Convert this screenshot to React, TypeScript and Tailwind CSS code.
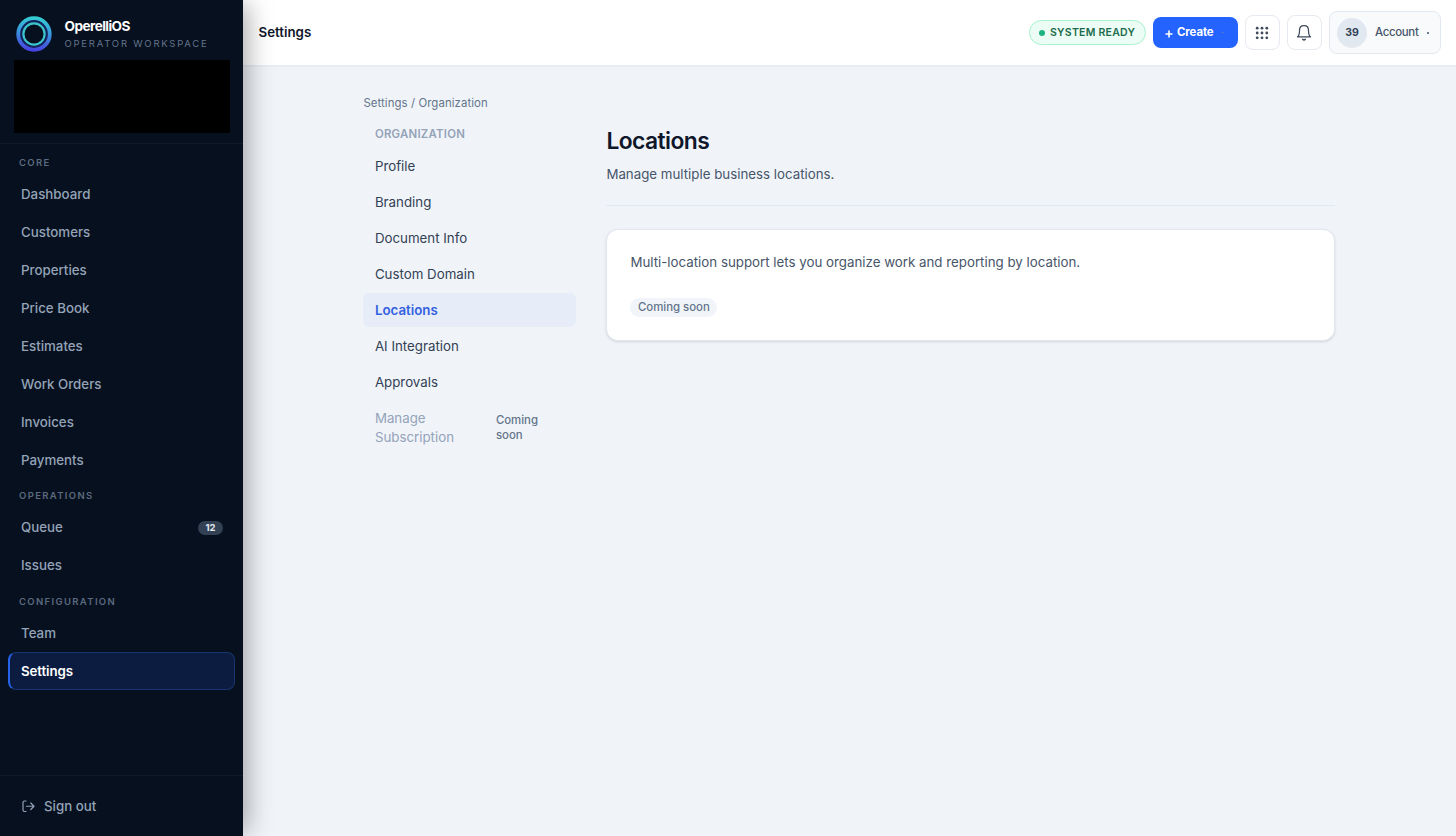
import clsx from "clsx";

const navSections = [
    {
        title: "Core",
        items: [
            { label: "Dashboard" },
            { label: "Customers" },
            { label: "Properties" },
            { label: "Price Book" },
            { label: "Estimates" },
            { label: "Work Orders" },
            { label: "Invoices" },
            { label: "Payments" },
        ],
    },
    {
        title: "Operations",
        items: [{ label: "Queue", badge: 12 }, { label: "Issues" }],
    },
    {
        title: "Configuration",
        items: [{ label: "Team" }, { label: "Settings", active: true }],
    },
] as { title: string; items: { label: string; badge?: number; active?: boolean }[] }[];

const settingsLinks = [
    "Profile",
    "Branding",
    "Document Info",
    "Custom Domain",
    "Locations",
    "AI Integration",
    "Approvals",
];

function Logo() {
    return (
        <svg className="size-9 shrink-0" viewBox="0 0 36 36" fill="none">
            <defs>
                <linearGradient id="ring" x1="20" y1="0" x2="16" y2="36" gradientUnits="userSpaceOnUse">
                    <stop stopColor="#33d3d3" />
                    <stop offset="0.5" stopColor="#3a8fdf" />
                    <stop offset="1" stopColor="#4a3be0" />
                </linearGradient>
            </defs>
            <circle cx="18" cy="18" r="13" stroke="#14225c" strokeWidth="4" />
            <circle cx="18" cy="18" r="15.8" stroke="url(#ring)" strokeWidth="3.8" />
            <circle cx="18" cy="18" r="10.6" stroke="#3cc4cb" strokeWidth="2.2" />
        </svg>
    );
}

function Sidebar() {
    return (
        <aside className="relative z-10 flex w-[243px] shrink-0 flex-col bg-[#06101e] shadow-[8px_0_24px_-4px_rgba(0,0,0,0.35)]">
            <div className="h-[144px] border-b border-[#101a29] pt-4 pr-[13px] pl-[14px]">
                <div className="flex h-9 items-center gap-[12.5px] pl-0.5">
                    <Logo />
                    <div>
                        <div className="text-[13.6px] leading-[18px] font-bold tracking-[-0.55px] text-white">OperelliOS</div>
                        <div className="pt-px text-[9.5px] leading-4 tracking-[1.77px] text-[#64748b] uppercase">
                            Operator Workspace
                        </div>
                    </div>
                </div>
                <div className="mt-2 h-[73px] bg-black" />
            </div>

            <nav className="flex-1 px-2 pt-0.5">
                {navSections.map((section) => (
                    <div key={section.title}>
                        <div className="flex h-[29.3px] items-center pt-[5px] pl-[11px] text-[9.5px] font-semibold tracking-[1.35px] text-[#5c6a7f] uppercase">
                            {section.title}
                        </div>
                        {section.items.map((item) => (
                            <a
                                key={item.label}
                                className={clsx(
                                    "flex h-[38px] w-[227px] items-center justify-between rounded-lg border pt-[1.5px] pr-[11px]",
                                    item.active
                                        ? "border-[#18356f] border-l-2 border-l-[#2563eb] bg-[#0c1c40] pl-[11px] text-[13.3px] font-semibold tracking-[-0.1px] text-white"
                                        : "border-transparent pl-3 text-[13.3px] font-medium text-[#94a3b8]"
                                )}
                            >
                                {item.label}
                                {item.badge && (
                                    <span className="flex h-[14px] w-[25px] items-center justify-center rounded-full bg-[#334155] text-[9.5px] font-bold text-[#e2e8f0]">
                                        {item.badge}
                                    </span>
                                )}
                            </a>
                        ))}
                    </div>
                ))}
            </nav>

            <div className="flex h-[61px] items-center gap-2 border-t border-[#101a29] pl-[21px] text-[13.3px] font-medium text-[#94a3b8]">
                <svg className="size-[15px]" viewBox="0 0 15 15" fill="none" stroke="currentColor" strokeWidth="1.2" strokeLinecap="round" strokeLinejoin="round">
                    <path d="M5 2H3.5Q2 2 2 3.5V11Q2 12.5 3.5 12.5H5M5.5 7.25H13M9.8 4L13 7.25L9.8 10.5" />
                </svg>
                <span className="pt-[1.5px]">Sign out</span>
            </div>
        </aside>
    );
}

function Topbar() {
    return (
        <header className="flex h-[67px] items-center justify-between border-b-2 border-[#e8edf3] bg-white px-[15.5px]">
            <div className="text-[13.3px] font-semibold text-[#0f172a]">Settings</div>
            <div className="flex items-center gap-[7px]">
                <div className="flex h-[25px] w-[117px] items-center gap-[5.5px] rounded-full border border-[#a7f3d0] bg-[#ecfdf5] pl-[9px] text-[10.5px] font-semibold tracking-[0.25px] whitespace-nowrap text-[#1b6b4c]">
                    <span className="size-1.5 rounded-full bg-[#1fb283]" />
                    SYSTEM READY
                </div>
                <button className="flex h-[31px] w-[85px] items-center rounded-lg bg-[#2563ff] pl-3 text-[11.4px] leading-none font-bold tracking-[-0.1px] text-white">
                    <svg className="mt-0.5 mr-[4.5px] size-2" viewBox="0 0 8 8" stroke="currentColor" strokeWidth="1.6">
                        <path d="M4 0.5V7.5M0.5 4H7.5" />
                    </svg>
                    Create
                    <span className="ml-[7px] h-px w-[3px] bg-[#4473d8]" />
                </button>
                <button className="flex size-[35px] items-center justify-center rounded-lg border border-[#e5e9f0] bg-white text-[#3f4a5c]">
                    <svg className="size-[14px]" viewBox="0 0 14 14" fill="currentColor">
                        {[2.2, 7, 11.8].map((y) =>
                            [2.2, 7, 11.8].map((x) => <circle key={`${x}-${y}`} cx={x} cy={y} r="1.4" />)
                        )}
                    </svg>
                </button>
                <button className="flex size-[35px] items-center justify-center rounded-lg border border-[#e5e9f0] bg-white text-[#3f4a5c]">
                    <svg className="size-[18px]" viewBox="0 0 18 18" fill="none" stroke="currentColor" strokeWidth="1.25" strokeLinecap="round" strokeLinejoin="round">
                        <path d="M2.5 12.8C4.1 11.6 4.5 9.8 4.5 6.4C4.5 3.5 6.4 1.6 9 1.6S13.5 3.5 13.5 6.4C13.5 9.8 13.9 11.6 15.5 12.8Z" />
                        <path d="M7.7 15.2Q9 16.6 10.3 15.2" strokeWidth="1.5" />
                    </svg>
                </button>
                <button className="flex h-[43px] w-[112px] items-center rounded-lg border border-[#e2e8f0] bg-[#f8fafc] pl-[7.5px] text-[11.4px] leading-none font-medium text-[#475569]">
                    <span className="mr-2 flex size-[30px] items-center justify-center rounded-full bg-[#e2e8f0] pt-px text-[10.5px] font-bold text-[#334155]">
                        39
                    </span>
                    <span className="w-[42px] pt-px tracking-[-0.3px]">Account</span>
                    <span className="ml-[10px] h-0.5 w-0.5 rounded-full bg-[#475569]" />
                </button>
            </div>
        </header>
    );
}

function SettingsMenu() {
    return (
        <div className="w-[212.5px] text-[13.3px]">
            <div className="pl-[11.5px] text-[11.4px] leading-4 font-semibold tracking-[0.25px] text-[#94a3b8]">
                ORGANIZATION
            </div>
            <div className="mt-[7px] flex flex-col gap-0.5">
                {settingsLinks.map((label) => (
                    <a
                        key={label}
                        className={clsx(
                            "flex h-[34px] items-center rounded-md px-[11.5px] pt-0.5",
                            label === "Locations" ? "bg-[#e6edf9] font-semibold text-[#3461e0]" : "text-[#334155]"
                        )}
                    >
                        {label}
                    </a>
                ))}
                <div className="flex items-center justify-between pt-2 pl-[11.5px] leading-[19px] text-[#94a3b8]">
                    <span className="w-[90px]">Manage Subscription</span>
                    <span className="w-20 text-[11.4px] leading-[15px] font-medium text-[#64748b]">
                        Coming
                        <br />
                        soon
                    </span>
                </div>
            </div>
        </div>
    );
}

export default function App() {
    return (
        <div className="flex h-[836px] w-full overflow-hidden bg-[#f0f4f9] font-['Inter',sans-serif]">
            <Sidebar />
            <div className="min-w-0 flex-1">
                <Topbar />
                <main className="ml-[120.4px] w-[972px] pt-7">
                    <div className="text-[11.4px] leading-4 tracking-[0.08px] text-[#64748b]">Settings / Organization</div>
                    <div className="mt-[15px] flex gap-[30.5px]">
                        <SettingsMenu />
                        <section className="flex-1">
                            <div className="border-b border-[#e2e8f0] pb-[21px]">
                                <h1 className="text-[22.8px] leading-[30px] font-semibold tracking-[-0.55px] text-[#0f172a]">
                                    Locations
                                </h1>
                                <p className="mt-2 text-[13.3px] leading-5 text-[#475569]">
                                    Manage multiple business locations.
                                </p>
                            </div>
                            <div className="mt-[23px] h-[112px] rounded-xl border border-[#e2e8f0] bg-white px-[23px] pt-[22px] shadow-sm">
                                <p className="text-[13.3px] leading-5 text-[#475569]">
                                    Multi-location support lets you organize work and reporting by location.
                                </p>
                                <span className="mt-[26px] flex h-[19px] w-[87px] items-center justify-center rounded-full bg-[#f1f5f9] text-[11.4px] font-medium text-[#64748b]">
                                    Coming soon
                                </span>
                            </div>
                        </section>
                    </div>
                </main>
            </div>
        </div>
    );
}
